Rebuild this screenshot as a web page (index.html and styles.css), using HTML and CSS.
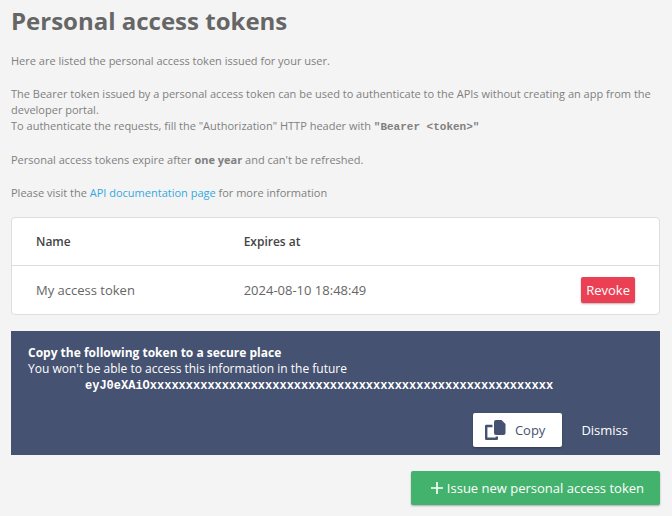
FILE: index.html
```html
<!DOCTYPE html>
<html lang="en">
<head>
<meta charset="utf-8">
<meta name="viewport" content="width=device-width, initial-scale=1">
<title>Personal access tokens</title>
<link rel="stylesheet" href="styles.css">
</head>
<body>
<main class="page">
  <h1 class="title">Personal access tokens</h1>
  <div class="intro">
    <p>Here are listed the personal access token issued for your user.</p>
    <p>The Bearer token issued by a personal access token can be used to authenticate to the APIs without creating an app from the developer portal.<br>
    To authenticate the requests, fill the "Authorization" HTTP header with <code>"Bearer &lt;token&gt;"</code></p>
    <p>Personal access tokens expire after <strong>one year</strong> and can't be refreshed.</p>
    <p>Please visit the <a href="#docs">API documentation page</a> for more information</p>
  </div>
  <div class="card">
    <table class="tokens">
      <thead>
        <tr><th scope="col">Name</th><th scope="col">Expires at</th><td></td></tr>
      </thead>
      <tbody>
        <tr>
          <td>My access token</td>
          <td>2024-08-10 18:48:49</td>
          <td class="action"><button class="btn btn-revoke" type="button">Revoke</button></td>
        </tr>
      </tbody>
    </table>
  </div>
  <section class="notice">
    <h2>Copy the following token to a secure place</h2>
    <p>You won't be able to access this information in the future</p>
    <code class="secret">eyJ0eXAiOxxxxxxxxxxxxxxxxxxxxxxxxxxxxxxxxxxxxxxxxxxxxxxxxxxxxxxxx</code>
    <div class="notice-actions">
      <button class="btn btn-copy" type="button">
        <svg width="20" height="20" viewBox="0 0 20 20" aria-hidden="true">
          <path d="M11 0H16.5L20.5 4V13Q20.5 15 18.5 15H11Q9 15 9 13V2Q9 0 11 0Z" fill="currentColor"/>
          <path d="M7.5 6H1.2V18.8H11.8V16.5" fill="none" stroke="currentColor" stroke-width="2.4" stroke-linejoin="round"/>
        </svg>
        Copy
      </button>
      <button class="btn btn-dismiss" type="button">Dismiss</button>
    </div>
  </section>
  <div class="footer">
    <button class="btn btn-issue" type="button">
      <svg width="12" height="12" viewBox="0 0 12 12" aria-hidden="true"><path d="M6 0V12M0 6H12" stroke="currentColor" stroke-width="1.6"/></svg>
      Issue new personal access token
    </button>
  </div>
</main>
</body>
</html>
```
FILE: styles.css
```css
* { box-sizing: border-box; }

body {
  margin: 0;
  background: #f4f4f4;
  color: #808080;
  font: 11px/16px "Open Sans", "Noto Sans", sans-serif;
}

h1, h2, p { margin: 0; }

code { font-family: "Liberation Mono", monospace; }

.page { padding: 4px 12px 10px 11px; }

.title {
  color: #666;
  font-size: 24px;
  font-weight: 700;
  line-height: 33px;
}

.intro {
  display: flex;
  flex-direction: column;
  gap: 17px;
  margin: 16px 0;
}

.intro code {
  font-size: 11px;
  font-weight: 700;
}

.intro a {
  color: #35a8e0;
  text-decoration: none;
}

.card {
  background: #fff;
  border: 1px solid #ddd;
  border-radius: 4px;
}

.tokens {
  width: 100%;
  border-collapse: separate;
  border-spacing: 0;
  table-layout: fixed;
  color: #666;
  font-size: 13px;
  font-weight: 500;
}

.tokens th,
.tokens td {
  height: 48px;
  padding: 0 24px;
  text-align: left;
}

.tokens th {
  color: #444;
  font-size: 12px;
  font-weight: 600;
}

.tokens th + th,
.tokens td + td { padding-left: 16px; }

.tokens thead th,
.tokens thead td { border-bottom: 1px solid #ddd; }

.tokens .action { text-align: right; }

.btn {
  height: 34px;
  border: 0;
  border-radius: 2px;
  color: #fff;
  font: 500 13px/18px "Open Sans", "Noto Sans", sans-serif;
  cursor: pointer;
}

.btn-revoke {
  height: 26px;
  padding: 0 5px;
  background: #eb4053;
  box-shadow: 0 1px 2px rgba(0, 0, 0, 0.3);
}

.notice {
  margin: 16px 0;
  padding: 14px 16px 8px 17px;
  background: #465271;
  color: #fff;
  font-size: 12px;
}

.notice h2 {
  font-size: 12px;
  font-weight: 700;
  line-height: 16px;
}

.secret {
  display: block;
  padding-left: 57px;
  font-size: 12px;
  font-weight: 700;
  line-height: 18px;
  overflow-wrap: anywhere;
}

.notice-actions {
  display: flex;
  justify-content: flex-end;
  gap: 3px;
  margin-top: 18px;
}

.btn-copy {
  display: flex;
  align-items: center;
  gap: 10px;
  padding: 0 17px 0 12px;
  background: #fff;
  color: #465271;
  box-shadow: 0 1px 2px rgba(0, 0, 0, 0.3);
}

.btn-copy svg { overflow: visible; }

.btn-dismiss {
  padding: 0 16px;
  background: transparent;
}

.footer {
  display: flex;
  justify-content: flex-end;
}

.btn-issue {
  display: flex;
  align-items: center;
  gap: 4px;
  padding: 0 16px 0 20px;
  background: #43b26d;
  box-shadow: 0 1px 2px rgba(0, 0, 0, 0.3);
}
```
